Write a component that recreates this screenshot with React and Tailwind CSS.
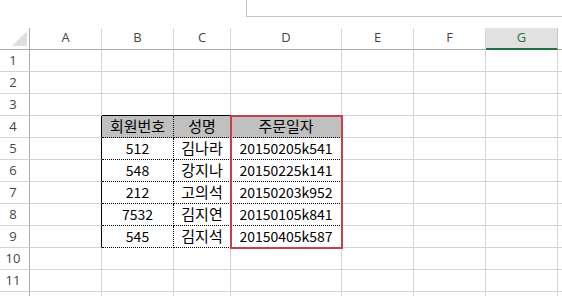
import React from "react";

const cols = ["A", "B", "C", "D", "E", "F", "G", "H"];
const data = {
  4: ["회원번호", "성명", "주문일자"],
  5: ["512", "김나라", "20150205k541"],
  6: ["548", "강지나", "20150225k141"],
  7: ["212", "고의석", "20150203k952"],
  8: ["7532", "김지연", "20150105k841"],
  9: ["545", "김지석", "20150405k587"],
};

const cellFont = { fontFamily: '"Noto Sans CJK KR", "Noto Sans", sans-serif' };

export default function App() {
  const rows = [1, 2, 3, 4, 5, 6, 7, 8, 9, 10, 11, 12];
  return (
    <div className="w-[562px] h-[296px] overflow-hidden bg-white" style={{ fontFamily: '"Open Sans", "Noto Sans", sans-serif' }}>
      <div className="h-[28px]">
        <div className="ml-[246px] h-[17px] border-l border-b border-[#c6c6c6]" />
      </div>
      <div className="relative grid grid-cols-[30px_72px_72px_57px_111px_72px_72px_72px_72px] auto-rows-[22px] w-[629px]">
        <div className="border-r border-b border-[#ababab] relative">
          <svg className="absolute left-[12px] top-[3px]" width="15" height="15" viewBox="0 0 15 15">
            <polygon points="15,0 15,15 0,15" fill="#dfdfdf" />
          </svg>
        </div>
        {cols.map((c) =>
          c === "G" ? (
            <div key={c} className="bg-[#e1e1e1] border-r border-[#c6c6c6] border-b-2 border-b-[#217346] flex items-center justify-center text-[13px] text-[#217346] pb-[1px]">
              {c}
            </div>
          ) : (
            <div key={c} className="border-r border-[#d9d9d9] border-b border-b-[#ababab] flex items-center justify-center text-[13px] text-[#444] pb-[2px]">
              {c === "H" ? null : c}
            </div>
          )
        )}
        {rows.map((r) => (
          <React.Fragment key={r}>
            <div className="border-r border-[#ababab] border-b border-b-[#d4d4d4] flex items-center justify-center pr-[3px] text-[13px] text-[#444]">
              {r === 12 ? null : r}
            </div>
            {cols.map((c, ci) => {
              const inTable = r >= 4 && r <= 9 && ci >= 1 && ci <= 3;
              const aboveTable = r === 3 && ci >= 1 && ci <= 3;
              const leftOfTable = r >= 4 && r <= 9 && ci === 0;
              let cls = "border-r border-b ";
              if (inTable) cls += "border-dotted border-black ";
              else if (aboveTable) cls += "border-r-[#d4d4d4] border-b-black border-b-dotted ";
              else if (leftOfTable) cls += "border-r-black border-r-dotted border-b-[#d4d4d4] ";
              else cls += "border-[#d4d4d4] ";
              if (r === 4 && inTable) cls += "bg-[#c0c0c0] ";
              let content = null;
              if (inTable) {
                const v = data[r][ci - 1];
                const korean = r === 4 || ci === 2;
                content = (
                  <span className={korean ? "text-[15px] leading-[20px]" : "text-[14px] leading-[20px]"}>{v}</span>
                );
                cls += "flex items-end justify-center text-black pb-[1px] ";
              }
              return (
                <div key={c} className={cls} style={inTable ? cellFont : undefined}>
                  {content}
                </div>
              );
            })}
          </React.Fragment>
        ))}
        <div className="absolute left-[230px] top-[87px] w-[113px] h-[134px] border-2 border-[#c5404a] pointer-events-none" />
      </div>
    </div>
  );
}
